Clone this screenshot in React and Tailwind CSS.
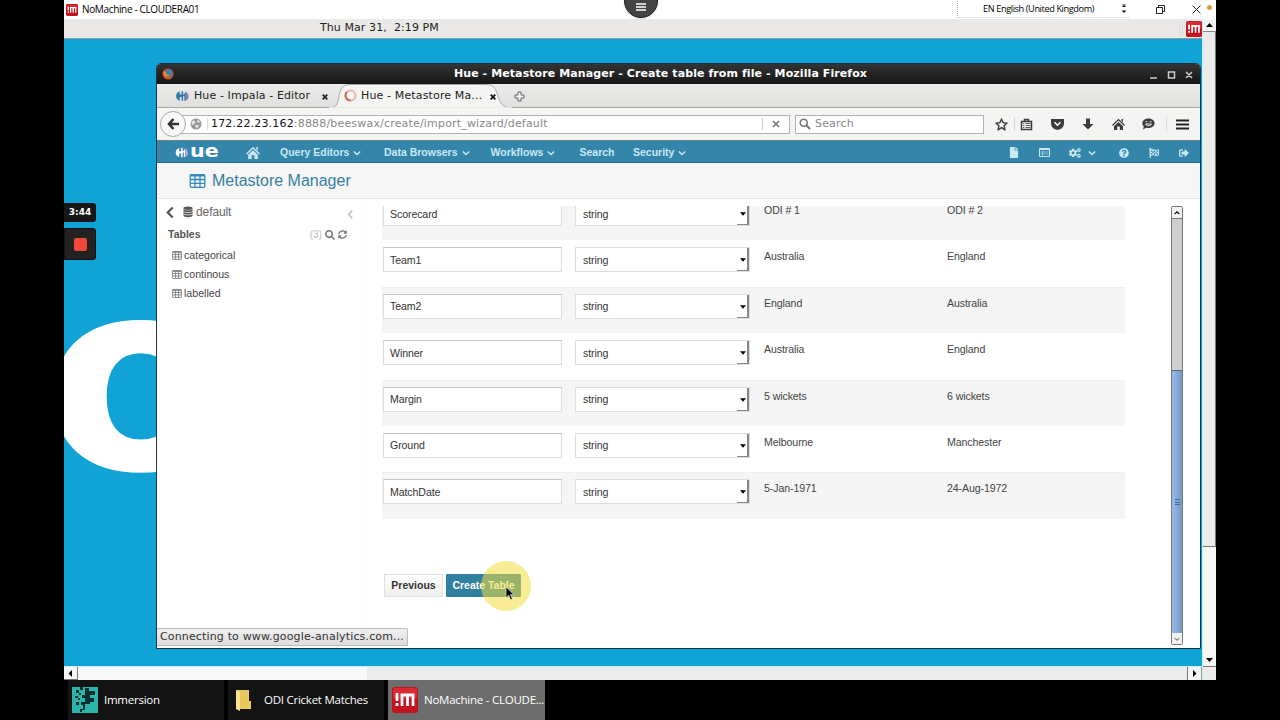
import React from "react";
import { FaFile, FaCogs, FaQuestionCircle, FaFlagCheckered, FaSignOutAlt, FaSearch, FaSyncAlt } from "react-icons/fa";

const rows = [
  { name: "Scorecard", type: "string", first: "ODI # 1", second: "ODI # 2" },
  { name: "Team1", type: "string", first: "Australia", second: "England" },
  { name: "Team2", type: "string", first: "England", second: "Australia" },
  { name: "Winner", type: "string", first: "Australia", second: "England" },
  { name: "Margin", type: "string", first: "5 wickets", second: "6 wickets" },
  { name: "Ground", type: "string", first: "Melbourne", second: "Manchester" },
  { name: "MatchDate", type: "string", first: "5-Jan-1971", second: "24-Aug-1972" },
];

const tables = ["categorical", "continous", "labelled"];

const Chevron = ({ className = "", d = "M1 3l4 4 4-4", width = 1.8 }) => (
  <svg className={className} viewBox="0 0 10 10" fill="none" stroke="currentColor" strokeWidth={width}>
    <path d={d} />
  </svg>
);

const Triangle = ({ d = "M0 1.500h7L3.500 5.500z", className = "" }) => (
  <svg className={className} viewBox="0 0 7 7" fill="#000">
    <path d={d} />
  </svg>
);

const TableIcon = ({ className = "" }) => (
  <svg className={className} viewBox="0 0 16 14" fill="none" stroke="currentColor" strokeWidth="1.300">
    <rect x="0.700" y="0.700" width="14.600" height="12.600" rx="1" />
    <path d="M1 1.600h14" strokeWidth="2" />
    <path d="M1 5.500h14M1 9.300h14M5.500 2v11M10.500 2v11" />
  </svg>
);

const DatabaseIcon = ({ className = "" }) => (
  <svg className={className} viewBox="0 0 12 13" fill="currentColor">
    <ellipse cx="6" cy="2" rx="5.500" ry="2" />
    <path d="M.5 3.300c1.500 1.700 9.500 1.700 11 0v1.700c0 2.300-11 2.300-11 0z" />
    <path d="M.5 6.200c1.500 1.700 9.500 1.700 11 0v1.700c0 2.300-11 2.300-11 0z" />
    <path d="M.5 9.100c1.500 1.700 9.500 1.700 11 0v1.700c0 2.600-11 2.600-11 0z" />
  </svg>
);

const HomeIcon = ({ className = "" }) => (
  <svg className={className} viewBox="0 0 13 13" fill="currentColor">
    <path d="M6.500.8L13 7l-.9.9L6.500 2.600.9 7.900 0 7zM9.500 1h1.500v3.200L9.500 2.800z" />
    <path d="M6.500 4L11 8.200V12H7.800V8.500H5.200V12H2V8.200z" />
  </svg>
);

const HueMark = ({ className = "", color = "#fff", accent = "#b7a5dc" }) => (
  <svg className={className} viewBox="0 0 14 12">
    <path d="M4 .8v3.700h2V.8h1.700v10.400H6V7H4v4.200C-1.200 9-1.200 3 4 .8z" fill={color} />
    <path d="M7 5.200h3M9.800 3v8" stroke={color} strokeWidth="1.600" />
    <path d="M9.800 1.200c4.600 1.500 4.800 8 1.400 9.800z" fill={accent} />
  </svg>
);

const NoMachineIcon = ({ className = "" }) => (
  <svg className={className} viewBox="0 0 26 26">
    <rect width="26" height="26" rx="3" fill="#c5121f" />
    <rect x="1" y="1" width="24" height="11" rx="2" fill="#d92a35" />
    <path d="M5 6v8M5 16v3M10 19V8h11v11M15.500 8v11" stroke="#fff" strokeWidth="2.800" fill="none" />
  </svg>
);

const MenuItem = ({ label, className = "", caret = true }) => (
  <div className={`flex items-center ${className}`}>
    <span>{label}</span>
    {caret && <Chevron className="ml-[4px] size-[8px]" />}
  </div>
);

const TitleBar = () => (
  <div className="flex h-[19px] shrink-0 items-center bg-white text-black">
    <NoMachineIcon className="ml-[2px] size-[12px]" />
    <span className="ml-[4px] w-[130px] whitespace-nowrap font-['Open_Sans',sans-serif] text-[10px] tracking-[-0.35px]">NoMachine - CLOUDERA01</span>
    <div className="ml-auto flex h-[17px] w-[173px] items-center border-b border-l border-b-[#e3e3e3] border-l-[#aaa] [border-left-style:dotted]">
      <span className="ml-[25px] whitespace-nowrap font-['Open_Sans',sans-serif] text-[9.2px] tracking-[-0.4px]">EN English (United Kingdom)</span>
      <svg className="ml-auto mr-[3px] h-[10px] w-[6px]" viewBox="0 0 6 10">
        <path d="M1.500 1h3M1.500 2.500h3" stroke="#000" />
        <path d="M.8 6.500h4.400L3 9z" fill="#000" />
      </svg>
    </div>
    <svg className="ml-[26px] mr-[27px] size-[9px]" viewBox="0 0 9 9" fill="none" stroke="#222">
      <path d="M.5 2.500h6v6h-6zM2.500 2.500v-2h6v6h-2" />
    </svg>
    <svg className="size-[9px]" viewBox="0 0 9 9" stroke="#222">
      <path d="M.5.5l8 8M8.500.5l-8 8" />
    </svg>
    <div className="mb-[4px] ml-[6px] mr-[4px] size-[5px] rounded-full bg-[#dd9a3c]" />
  </div>
);

const BrowserTabs = () => (
  <div className="flex h-[24px] shrink-0 items-center border-b border-[#a9a6a6] bg-linear-to-b from-[#ebebea] to-[#dfdfde] font-['DejaVu_Sans',sans-serif] text-[11px] text-[#222]">
    <HueMark className="ml-[19px] h-[12px] w-[13px]" color="#2c77a5" accent="#8b7bb5" />
    <span className="ml-[5px] mt-px w-[128px] whitespace-nowrap tracking-[0.1px]">Hue - Impala - Editor</span>
    <svg className="mt-[2px] size-[6px]" viewBox="0 0 7 7" stroke="#222" strokeWidth="2">
      <path d="M.8.8l5.400 5.400M6.200.8L.8 6.200" />
    </svg>
    <div className="relative ml-px flex h-[24px] w-[184px] items-center">
      {/* curved outline of the active tab */}
      <svg className="absolute inset-0 h-[24px] w-[184px]" viewBox="0 0 184 24">
        <path d="M0 24c8 0 9-5 10-12S14 .5 21 .5H158c7 0 9 5 11 11.500S173 24 183 24z" fill="#f4f5f3" stroke="#a9a6a6" />
        <path d="M0 24h183" stroke="#f4f5f3" strokeWidth="1.500" />
      </svg>
      <svg className="relative ml-[15px] size-[13px]" viewBox="0 0 13 13" fill="none" strokeWidth="2">
        <circle cx="6.500" cy="6.500" r="5" stroke="#e6b5a6" />
        <path d="M6.500 11.500A5 5 0 0 1 3 3" stroke="#c4705a" />
      </svg>
      <span className="relative ml-[4px] mt-px w-[129px] whitespace-nowrap tracking-[0.14px]">Hue - Metastore Ma...</span>
      <svg className="relative mt-[2px] size-[6px]" viewBox="0 0 7 7" stroke="#111" strokeWidth="2">
        <path d="M.8.8l5.400 5.400M6.200.8L.8 6.200" />
      </svg>
    </div>
    <svg className="ml-px mt-px size-[11px]" viewBox="0 0 11 11" fill="#eee" stroke="#666">
      <path d="M4 1h3v3h3v3H7v3H4V7H1V4h3z" />
    </svg>
  </div>
);

const AddressBar = () => (
  <div className="flex h-[32px] shrink-0 items-center bg-[#f4f5f3] font-['DejaVu_Sans',sans-serif] text-[11px] tracking-[0.18px] text-[#888]">
    <div className="z-10 ml-[3px] flex size-[26px] items-center justify-center rounded-full border border-[#aaa] bg-[#f8f8f8]">
      <svg className="size-[12px]" viewBox="0 0 12 12" fill="none" stroke="#333" strokeWidth="2.600">
        <path d="M6.500 1L2 6l4.500 5M2 6h10" />
      </svg>
    </div>
    <div className="ml-[-6px] flex h-[19px] w-[610px] items-center border border-[#b2b2b2] bg-white">
      <svg className="ml-[9px] size-[12px]" viewBox="0 0 12 12">
        <circle cx="6" cy="6" r="5.500" fill="#999" />
        <path d="M1.500 4C4 1 6 3 5 5S2.500 6.500 2 7zM7 2l3 1-1 2-2-1zM5 7l4 0-2 4z" fill="#e5e5e5" />
      </svg>
      <div className="ml-[5px] h-[12px] w-px bg-[#ddd]" />
      <span className="ml-[3px] whitespace-nowrap"><span className="text-[#111]">172.22.23.162</span>:8888/beeswax/create/import_wizard/default</span>
      <div className="ml-auto h-[12px] w-px bg-[#ccc]" />
      <svg className="ml-[9px] mr-[9px] size-[8px]" viewBox="0 0 8 8" stroke="#777" strokeWidth="1.700">
        <path d="M1 1l6 6M7 1L1 7" />
      </svg>
    </div>
    <div className="ml-[5px] flex h-[19px] w-[189px] items-center border border-[#b2b2b2] bg-white">
      <svg className="ml-[3px] size-[12px]" viewBox="0 0 12 12" fill="none" stroke="#777" strokeWidth="1.600">
        <circle cx="4.700" cy="4.700" r="3.500" />
        <path d="M7.300 7.300L11 11" strokeWidth="2" />
      </svg>
      <span className="ml-[4px]">Search</span>
    </div>
    <div className="flex flex-1 items-center pl-[11px] text-[#3c3c3c]">
      <svg className="size-[13px]" viewBox="0 0 13 13" fill="none" stroke="currentColor" strokeWidth="1.400" strokeLinejoin="round">
        <path d="M6.500 1l1.600 3.700 4 .4-3 2.700.9 4-3.500-2.100L3 11.800l.9-4-3-2.700 4-.4z" />
      </svg>
      <div className="ml-[6px] h-[14px] w-px bg-[#d5d5d5]" />
      <svg className="ml-[5px] size-[13px]" viewBox="0 0 13 13" fill="none" stroke="currentColor">
        <path d="M1.500 3.500h10v8h-10zM4.500 3.500v-2h4v2" strokeWidth="1.500" />
        <path d="M3 5.500h1.300M5.500 5.500h5M3 7.500h1.300M5.500 7.500h5M3 9.500h1.300M5.500 9.500h5" strokeWidth=".8" />
      </svg>
      <svg className="ml-[18px] h-[12px] w-[13px]" viewBox="0 0 13 12">
        <path d="M0 1h13v4c0 9-13 9-13 0z" fill="currentColor" />
        <path d="M3.500 4.200l3 3 3-3" stroke="#fff" strokeWidth="1.500" fill="none" />
      </svg>
      <svg className="ml-[18px] size-[12px]" viewBox="0 0 12 12" fill="currentColor">
        <path d="M4 .5h4V6h3.500L6 11.500.5 6H4z" />
      </svg>
      <HomeIcon className="ml-[18px] size-[13px]" />
      <svg className="ml-[17px] h-[12px] w-[13px]" viewBox="0 0 13 12">
        <path d="M6.500.5c8 0 8 9.500 0 9.500-1 0-1.500 0-2.300-.2L1 11.500l.8-3C-1.500 5 1.200.5 6.500.5z" fill="currentColor" />
        <path d="M3.500 3.700h1.700M7.800 3.700h1.700M3.500 6c1.500 2.300 4.500 2.300 6 0z" stroke="#f4f5f3" strokeWidth="1" fill="none" />
      </svg>
      <div className="ml-[11px] h-[14px] w-px bg-[#ddd]" />
      <svg className="ml-[9px] h-[11px] w-[13px]" viewBox="0 0 13 11" stroke="#222" strokeWidth="2.200">
        <path d="M0 1.500h13M0 5.500h13M0 9.500h13" />
      </svg>
    </div>
  </div>
);

const HueNav = () => (
  <div className="flex h-[23px] shrink-0 items-center border-y border-t-[#6d7f7d] border-b-[#23698c] bg-[#3385aa] pt-[2px] font-['Liberation_Sans',Arial,sans-serif] text-[10.5px] font-bold text-[#c9e9f5]">
    <div className="ml-[18px] flex h-[14px] w-[46px] items-center text-white">
      <HueMark className="h-[11px] w-[14px] shrink-0" />
      <span className="-mt-[4px] ml-px origin-left scale-x-[1.180] font-['DejaVu_Sans',sans-serif] text-[17.5px] leading-[14px]">ue</span>
    </div>
    <HomeIcon className="ml-[25px] size-[14px]" />
    <MenuItem label="Query Editors" className="ml-[20px] w-[104px]" />
    <MenuItem label="Data Browsers" className="w-[106.500px]" />
    <MenuItem label="Workflows" className="w-[89px]" />
    <MenuItem label="Search" className="w-[53.500px]" caret={false} />
    <MenuItem label="Security" />
    <div className="ml-auto flex items-center pr-[11px]">
      <FaFile className="h-[11px] w-[10px]" />
      <svg className="ml-[20px] h-[9px] w-[11px]" viewBox="0 0 11 9" fill="none" stroke="currentColor">
        <path d="M.5.500h10v8H.5zM.5 1.500h10" />
        <path d="M1.500 4h8M1.500 6h8M3.500 3v5" strokeOpacity=".6" />
      </svg>
      <FaCogs className="ml-[19px] size-[12px]" />
      <Chevron className="ml-[7px] size-[8px]" />
      <FaQuestionCircle className="ml-[23px] size-[10px]" />
      <FaFlagCheckered className="ml-[20px] size-[10px]" />
      <FaSignOutAlt className="ml-[20px] size-[10px]" />
    </div>
  </div>
);

const Sidebar = () => (
  <div className="w-[206px] shrink-0 border-r border-[#fafafa] text-[11px] text-[#555]">
    <div className="mt-[5px] flex h-[16px] items-center">
      <Chevron className="ml-[8px] size-[11px]" d="M7 .5L2.500 5 7 9.500" width={2} />
      <DatabaseIcon className="ml-[7px] h-[12px] w-[10px]" />
      <span className="ml-[3px] text-[12px] tracking-[-0.1px] text-[#666]">default</span>
      <Chevron className="ml-auto mr-[7px] mt-[5px] size-[9px] text-[#bbb]" d="M7 .5L3 5l4 4.500" width={1.500} />
    </div>
    <div className="mt-[7px] flex h-[15px] items-center">
      <span className="ml-[11px] text-[10.5px] font-bold leading-[13px]">Tables</span>
      <span className="ml-auto text-[10px] leading-[13px] text-[#bbb]">(3)</span>
      <FaSearch className="ml-[3px] size-[10px] text-[#777]" />
      <FaSyncAlt className="ml-[3px] mr-[15px] size-[9px] text-[#777]" />
    </div>
    <div className="mt-[4px]">
      {tables.map((t) => (
        <div key={t} className="flex h-[19.200px] items-center pl-[15px] text-[#444]">
          <TableIcon className="h-[9px] w-[10px] text-[#777]" />
          <span className="ml-[2px] text-[10.6px] leading-[13px]">{t}</span>
        </div>
      ))}
    </div>
  </div>
);

const WizardRow = ({ row, striped }) => (
  <div className={`flex h-[46.400px] w-[743px] pl-px pt-[7px] ${striped ? "bg-[#f5f5f5] shadow-[inset_0_1px_0_#efefef]" : ""}`}>
    <div className="flex h-[25px] w-[179px] items-center border border-[#ddd] border-t-[#c4c4c4] bg-white pl-[6px]">{row.name}</div>
    <div className="ml-[13px] flex h-[25px] w-[175px] items-center border border-[#ddd] bg-white pl-[7px]">
      <span>{row.type}</span>
      <div className="ml-auto flex h-[23px] w-[12px] items-center justify-center border-b-[1.500px] border-r-2 border-[#888] pl-px">
        <Triangle className="mt-[2px] size-[6px]" />
      </div>
    </div>
    <div className="ml-[14px] mt-[2px] w-[183px] text-[#444]">{row.first}</div>
    <div className="mt-[2px] text-[#444]">{row.second}</div>
  </div>
);

const Wizard = () => (
  <div className="flex flex-1 pt-[7px]">
    <div className="flex h-full w-[808px] flex-col overflow-hidden pl-[19px]">
      <div className="h-[313px] overflow-hidden text-[10.6px] leading-[14px] tracking-[-0.1px] text-[#333]">
        <div className="-mt-[12px]">
          {rows.map((row, i) => (
            <WizardRow key={row.name} row={row} striped={i % 2 === 0} />
          ))}
        </div>
      </div>
      <div className="mt-[55px] flex gap-[3px] pl-[2px] text-[10.5px] font-bold">
        <div className="flex h-[23px] w-[59px] items-center justify-center border border-[#e0e0e0] bg-linear-to-b from-white to-[#eee] text-[#333]">Previous</div>
        <div className="relative flex h-[23px] w-[75px] items-center justify-center rounded-[1px] bg-[#2f7f9f] text-white">
          <span className="whitespace-nowrap">Create Table</span>
          {/* click highlight and pointer */}
          <div className="absolute -top-[13px] left-[35px] size-[50px] rounded-full bg-[#f2df3e]/55" />
          <svg className="absolute left-[59px] top-[12px] h-[15px] w-[10px]" viewBox="0 0 11 17">
            <path d="M1 1v12l3-2.600L6.200 15.500l2-1L6 9.800h4z" fill="#000" stroke="#ddd" strokeWidth=".8" />
          </svg>
        </div>
      </div>
    </div>
    <div className="flex h-[439px] w-[12px] flex-col rounded-[2px] border border-[#777] bg-[#d0cfcd]">
      <div className="flex h-[12px] items-center justify-center border-b border-[#777] bg-[#f1f1f0]">
        <Chevron className="size-[6px]" d="M1 7l4-4 4 4" />
      </div>
      <div className="h-[151px]" />
      <div className="flex flex-1 items-center justify-center border-t border-[#4b6d97] bg-linear-to-r from-[#9dbbe2] to-[#7399cc]">
        <div className="h-[6px] w-[5px] border-y border-[#44699b] pt-[1.500px]">
          <div className="h-px bg-[#44699b]" />
        </div>
      </div>
      <div className="flex h-[11px] items-center justify-center bg-[#f1f1f0]">
        <Chevron className="size-[6px] text-[#888]" />
      </div>
    </div>
  </div>
);

const FirefoxWindow = () => (
  <div className="relative flex h-[586px] w-[1045px] flex-col overflow-hidden rounded-t-[5px] border border-[#1b3440] bg-white">
    <div className="flex h-[20px] shrink-0 items-center bg-linear-to-b from-[#343434] to-[#161616] text-white">
      <svg className="ml-[5px] size-[12px]" viewBox="0 0 12 12">
        <circle cx="6" cy="6" r="5.500" fill="#c9542a" />
        <circle cx="6.800" cy="5" r="3.600" fill="#3f7fb5" />
        <path d="M1 3c2 .5 3 1 3.500 2.500s1.500 2 3.500 1.500c-1 2-5 2.500-6.500-1z" fill="#e88b35" />
      </svg>
      <span className="flex-1 whitespace-nowrap pr-[2px] text-center font-['DejaVu_Sans',sans-serif] text-[11px] font-bold tracking-[0.09px]">Hue - Metastore Manager - Create table from file - Mozilla Firefox</span>
      <svg className="mr-[7px] h-[9px] w-[44px]" viewBox="0 0 44 9" fill="none" stroke="#ccc" strokeWidth="1.500">
        <path d="M1 8h7M19.500 2h6v6h-6zM37 2l6 6M43 2l-6 6" />
      </svg>
    </div>
    <BrowserTabs />
    <AddressBar />
    <HueNav />
    <div className="flex h-[36px] shrink-0 items-center border-b border-[#e6e6e6] bg-[#f6f6f6] pt-px font-['Liberation_Sans',Arial,sans-serif] text-[16px] text-[#338bb8]">
      <TableIcon className="ml-[32px] h-[14px] w-[17px]" />
      <span className="ml-[6px] text-[#35809f]">Metastore Manager</span>
    </div>
    <div className="flex flex-1 font-['Liberation_Sans',Arial,sans-serif]">
      <Sidebar />
      <Wizard />
    </div>
    <div className="absolute bottom-[2px] left-0 flex h-[18px] w-[251px] items-center whitespace-nowrap rounded-tr-[2px] border border-l-0 border-[#bbb] bg-linear-to-b from-[#efefef] to-[#dedede] pl-[3px] font-['DejaVu_Sans',sans-serif] text-[11px] tracking-[0.15px] text-[#333]">
      Connecting to www.google-analytics.com...
    </div>
  </div>
);

const RemoteScreen = () => (
  <div className="flex w-[1138px] shrink-0 flex-col">
    <div className="flex h-[20px] shrink-0 items-center border-b border-[#8e9a9c] bg-[#eae9e7] font-['DejaVu_Sans',sans-serif] text-[11px] tracking-[0.08px] text-[#222]">
      <span className="ml-[256px] whitespace-pre">Thu Mar 31,  2:19 PM</span>
      <div className="ml-auto mr-[3px] h-[13px] w-[4px] border-x border-dotted border-[#ccc]" />
      <NoMachineIcon className="size-[16px]" />
    </div>
    <div className="relative h-[627px] overflow-hidden bg-[#11a3d6] pl-[92px] pt-[24px]">
      {/* wallpaper lettering behind the window */}
      <span className="absolute left-[-22px] top-[205px] origin-left scale-x-[1.080] font-['DejaVu_Sans',sans-serif] text-[266px] font-bold leading-[266px] text-white">o</span>
      <FirefoxWindow />
    </div>
    <div className="flex h-[14px] border-t border-[#cfeaf2] bg-[#ececec]">
      <div className="flex w-[14px] items-center justify-center border-b border-r border-[#777] bg-[#f5f5f5]">
        <Triangle className="size-[7px]" d="M5 0v7L1.500 3.500z" />
      </div>
      <div className="w-[289px] bg-[#f8f8f8]" />
      <div className="flex-1 border-r border-[#777]" />
      <div className="flex w-[14px] items-center justify-center border-r border-[#999] bg-[#f5f5f5]">
        <Triangle className="size-[7px]" d="M2 0v7l3.500-3.500z" />
      </div>
    </div>
  </div>
);

const TaskItem = ({ icon, label, className = "", labelClass = "" }) => (
  <div className={`flex h-full items-center overflow-hidden whitespace-nowrap ${className}`}>
    {icon}
    <span className={labelClass}>{label}</span>
  </div>
);

export default function App() {
  return (
    <div className="relative h-[720px] w-[1280px] overflow-hidden bg-black px-[64px]">
      <div className="flex h-[680px] flex-col">
        <TitleBar />
        <div className="flex flex-1">
          <RemoteScreen />
          <div className="flex w-[14px] flex-col border-l border-[#bdf3f8] bg-[#ebebeb]">
            <div className="flex h-[13px] items-center justify-center border-b border-[#888] bg-[#f5f5f5]">
              <Triangle className="size-[7px]" d="M0 5h7L3.500 1z" />
            </div>
            <div className="h-[515px] border-b border-r border-[#777]" />
            <div className="flex-1 bg-[#f6f6f6]" />
            <div className="flex h-[14px] items-center justify-center bg-[#f6f6f6]">
              <Triangle className="size-[7px]" d="M0 2h7L3.500 6z" />
            </div>
            <div className="h-[14px] border-t border-[#777]" />
          </div>
        </div>
      </div>
      <div className="flex h-[40px] gap-[4px] pl-[4px] font-['Open_Sans',sans-serif] text-[11.5px] tracking-[-0.25px] text-white">
        <TaskItem
          className="w-[156px] bg-[#131313] pl-[4px]"
          labelClass="ml-[6px]"
          label="Immersion"
          icon={
            <svg className="size-[26px] shrink-0" viewBox="0 0 26 26">
              <rect width="26" height="26" fill="#2cb5aa" />
              <path d="M8 0h3v3H8zM13 1h4v3h6v4h-5v3h4v4h-4v2h-5v6h-3v2H8v-3h3v-4H9v-3h4v-4h-3V8h3zM4 3h3v3H4zM7 6h2v2H7zM3 9h3v2H3zM6 11h2v2H6zM4 15h3v3H4z" fill="#08302f" />
            </svg>
          }
        />
        <TaskItem
          className="w-[156px] bg-[#131313] pl-[8px]"
          labelClass="ml-[13px]"
          label="ODI Cricket Matches"
          icon={
            <svg className="h-[23px] w-[15px] shrink-0" viewBox="0 0 15 23">
              <path d="M0 1h13v11h2v8H0z" fill="#e9c85e" />
              <path d="M0 1l4 2v19l-4-2z" fill="#fbe38d" />
            </svg>
          }
        />
        <TaskItem
          className="w-[157px] bg-[#6d6d6d] pl-[4px]"
          labelClass="ml-[6px]"
          label="NoMachine - CLOUDE..."
          icon={<NoMachineIcon className="size-[26px] shrink-0" />}
        />
      </div>
      {/* remote session handle */}
      <div className="absolute left-[624px] top-[-16px] flex size-[34px] items-end justify-center rounded-full border border-[#222] bg-[#444] pb-[6px] shadow">
        <svg className="h-[8px] w-[10px]" viewBox="0 0 10 8" stroke="#fff" strokeWidth="1.300">
          <path d="M0 1h10M0 4h10M0 7h10" />
        </svg>
      </div>
      {/* recorder widget */}
      <div className="absolute left-[64px] top-[203px] flex w-[32px] flex-col gap-[6px]">
        <div className="flex h-[19px] items-center justify-center rounded-r-[3px] bg-[#161616] font-['DejaVu_Sans',sans-serif] text-[9px] font-bold text-white">3:44</div>
        <div className="flex h-[32px] items-center justify-center rounded-r-[3px] border border-[#111] bg-[#222]">
          <div className="size-[13px] rounded-[2px] bg-[#f0483a]" />
        </div>
      </div>
    </div>
  );
}
